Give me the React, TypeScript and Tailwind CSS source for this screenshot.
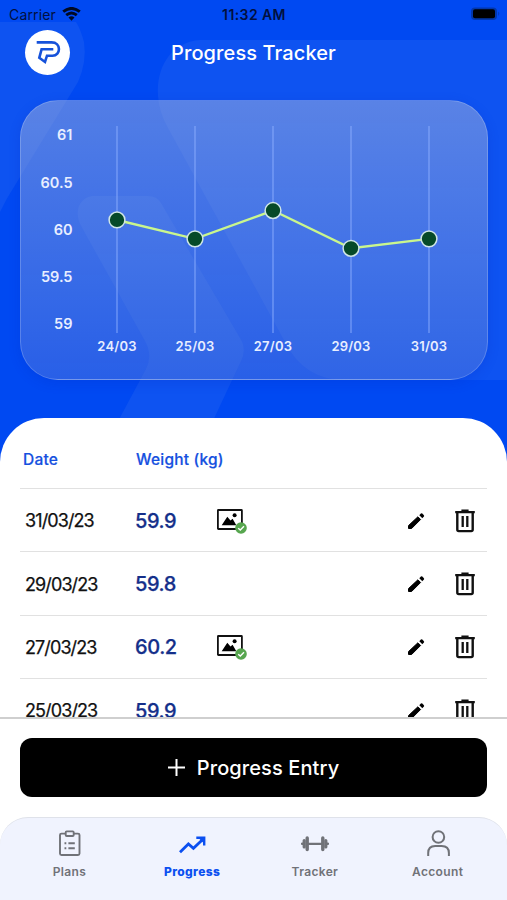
import type { ReactNode } from 'react'
import { clsx } from 'clsx'

interface Entry {
  date: string
  weight: string
  hasPhoto: boolean
}

const ENTRIES: Entry[] = [
  { date: '31/03/23', weight: '59.9', hasPhoto: true },
  { date: '29/03/23', weight: '59.8', hasPhoto: false },
  { date: '27/03/23', weight: '60.2', hasPhoto: true },
  { date: '25/03/23', weight: '59.9', hasPhoto: false },
]

const POINTS = [
  { label: '24/03', value: 60.1 },
  { label: '25/03', value: 59.9 },
  { label: '27/03', value: 60.2 },
  { label: '29/03', value: 59.8 },
  { label: '31/03', value: 59.9 },
]

const TICKS = [61, 60.5, 60, 59.5, 59]

const xAt = (index: number) => 96 + index * 78
const yAt = (value: number) => 34 + (61 - value) * 94.4

function Backdrop() {
  return (
    <svg className="absolute inset-0" width="507" height="480" viewBox="0 0 507 480" fill="#0e53f1">
      <path d="M0 22H76C80 28 82 35 84 42Q87 62 78 82L14 187Q6 199 0 212Z" />
      <path d="M507 40H200C172 42 156 66 158 96Q159 112 168 128L285 342Q304 380 345 380H507Z" />
      <path d="M92 196H148Q157 196 161 203L240 338Q247 349 241 361L211 425H116L146 369Q153 355 145 341L80 224C74 210 80 198 92 196Z" />
    </svg>
  )
}

function StatusBar() {
  return (
    <div className="flex h-7 items-center justify-between pr-1.5 pl-[9px] text-[#02103f]">
      <div className="flex w-40 items-center gap-1.5">
        <span className="text-[14px] tracking-[0.15px]">Carrier</span>
        <svg width="19" height="14" viewBox="0 0 19 14" fill="none" stroke="#000a24" strokeWidth="2.9">
          <path d="M1.2 4.7Q9.5-1.9 17.8 4.7" />
          <path d="M4.2 8.2Q9.5 3.9 14.8 8.2" />
          <path d="M9.5 13.8 6.5 10.5Q9.5 8.2 12.5 10.5Z" fill="#000a24" stroke="none" />
        </svg>
      </div>
      <span className="-ml-0.5 text-[14px] font-semibold tracking-[0.4px]">11:32 AM</span>
      <div className="flex w-40 justify-end">
        <svg width="31" height="14" viewBox="0 0 31 14">
          <rect x="1" y="0.5" width="26" height="12.5" rx="4" fill="#0237ac" />
          <rect x="3" y="2.3" width="22" height="9" rx="2" fill="#000" />
          <path d="M28.3 4.5Q30.2 6.7 28.3 9Z" fill="#0237ac" />
        </svg>
      </div>
    </div>
  )
}

function Logo() {
  return (
    <div className="flex size-[45px] items-center justify-center rounded-full bg-white">
      <svg width="45" height="45" viewBox="0 0 45 45" fill="none" stroke="#1652da" strokeWidth="2.6">
        <path d="M11.7 12.4H26.5C36.5 12.4 36 25.7 27.5 25.7H22L20 32 14.3 27.8 16.6 19.2H28.3" />
      </svg>
    </div>
  )
}

function Header() {
  return (
    <header className="grid h-12 grid-cols-[1fr_auto_1fr] items-center px-[25px]">
      <Logo />
      <h1 className="pt-px text-[20px] font-medium tracking-[0.1px] text-white">Progress Tracker</h1>
      <span />
    </header>
  )
}

function WeightChart() {
  const line = POINTS.map((p, i) => `${xAt(i)},${yAt(p.value)}`).join(' ')

  return (
    <section className="mx-5 mt-6 mb-[38px] h-[280px] w-[468px] rounded-[38px] border-[1.5px] border-white/20 bg-linear-to-b from-[#a5b3da]/50 to-[#5a7bda]/45 shadow-[0_3px_12px_rgba(0,40,190,0.2)]">
      <svg width="465" height="277" viewBox="0 0 465 277">
        {TICKS.map((tick) => (
          <text key={tick} x="51.5" y={yAt(tick) + 5.3} textAnchor="end" className="fill-[#e8eeff] text-[14.5px] font-semibold">
            {tick}
          </text>
        ))}
        {POINTS.map((p, i) => (
          <g key={p.label}>
            <line x1={xAt(i)} x2={xAt(i)} y1="25" y2="232" stroke="#8fb0ff" strokeOpacity="0.5" strokeWidth="1.8" />
            <text x={xAt(i)} y="249.5" textAnchor="middle" className="fill-[#e8eeff] text-[13px] font-semibold tracking-[0.2px]">
              {p.label}
            </text>
          </g>
        ))}
        <polyline points={line} fill="none" stroke="#c9f68d" strokeWidth="2.4" />
        {POINTS.map((p, i) => (
          <circle key={p.label} cx={xAt(i)} cy={yAt(p.value)} r="7.9" fill="#064a29" stroke="#cfe6e6" strokeWidth="1.5" />
        ))}
      </svg>
    </section>
  )
}

function PhotoIcon() {
  return (
    <svg width="32" height="28" viewBox="0 0 32 28">
      <rect x="2.9" y="3" width="24" height="19" rx="0.5" fill="none" stroke="#111" strokeWidth="1.8" />
      <path d="M6.7 18.3 12.3 9.7 15.5 13.5 17.6 11.8 21.3 18.3Z" fill="#000" />
      <circle cx="19.6" cy="8.3" r="2" fill="#000" />
      <circle cx="26" cy="21" r="5.8" fill="#57a64f" />
      <path d="M23.2 21.2 25.3 23.1 29 19.3" fill="none" stroke="#fff" strokeWidth="1.4" />
    </svg>
  )
}

function PencilIcon() {
  return (
    <svg width="18" height="18" viewBox="0 0 18 18">
      <path d="M1.5 16.5V13.6L10.9 4.8 13.6 7.5 4.6 16.5Z" stroke="#000" strokeLinejoin="round" strokeWidth="1" />
      <path d="M12.3 3.2 13.9 1.6Q14.6 1 15.3 1.6L16.9 3.2Q17.5 3.9 16.9 4.6L15.3 6.2Z" />
    </svg>
  )
}

function TrashIcon() {
  return (
    <svg width="20" height="24" viewBox="0 0 20 24" fill="none" stroke="#111">
      <path d="M.2 3.2H19.8M6.4 1.7H13.6" strokeWidth="2.2" />
      <path d="M2.3 3.4V20.6Q2.3 22.1 3.8 22.1H16.2Q17.7 22.1 17.7 20.6V3.4" strokeWidth="2.4" />
      <path d="M7.7 7V18M12.3 7V18" strokeWidth="2.3" />
    </svg>
  )
}

function EntryRow({ entry }: { entry: Entry }) {
  return (
    <div className="flex h-[63.4px] shrink-0 items-center border-t-[1.5px] border-[#e1e1e1] pt-px pr-3 pl-[5px]">
      <span className="w-[110px] text-[18px] tracking-[-0.9px] text-[#111] [-webkit-text-stroke:0.25px_#111]">{entry.date}</span>
      <span className="w-20 text-[20px] font-medium tracking-[-0.4px] text-[#142f8a] [-webkit-text-stroke:0.25px_#142f8a]">{entry.weight}</span>
      {entry.hasPhoto && <PhotoIcon />}
      <div className="ml-auto flex items-center gap-[30px]">
        <PencilIcon />
        <TrashIcon />
      </div>
    </div>
  )
}

function EntryTable() {
  return (
    <section className="flex h-[299px] flex-col overflow-hidden rounded-t-[44px] bg-white px-5">
      <div className="flex h-[70px] shrink-0 items-center pt-3.5 pl-[3px] text-[15.5px] font-medium tracking-[0.2px] text-[#1550df] [-webkit-text-stroke:0.2px_#1550df]">
        <span className="w-[113px]">Date</span>
        <span>Weight (kg)</span>
      </div>
      {ENTRIES.map((entry) => (
        <EntryRow key={entry.date} entry={entry} />
      ))}
    </section>
  )
}

function ClipboardIcon() {
  return (
    <svg width="24" height="28" viewBox="0 0 24 28" fill="none" stroke="currentColor" strokeWidth="1.9">
      <rect x="3" y="4.6" width="19.5" height="21.4" rx="1.5" />
      <rect x="8.7" y="2.4" width="8" height="4.6" rx="1" fill="#f0f3fe" />
      <path d="M7.5 14.2H9.3M11.4 14.2H17.8M7.5 19.2H9.3M11.4 19.2H17.8" />
    </svg>
  )
}

function TrendIcon() {
  return (
    <svg width="28" height="28" viewBox="0 0 28 28" fill="none" stroke="currentColor" strokeWidth="2.8">
      <path d="M2 23.2 10.4 15 15.4 19.3 24.7 10.4" />
      <path d="M18.3 8.8H26.2V16.5" strokeWidth="2.4" />
      <path d="M20 8.5H26.5V15Z" fill="currentColor" stroke="none" />
    </svg>
  )
}

function DumbbellIcon() {
  return (
    <svg width="28" height="28" viewBox="0 0 28 28" fill="none" stroke="currentColor" strokeLinecap="round">
      <path d="M7 14.8H21" strokeWidth="2.3" />
      <path d="M6.2 9V20.6M21.8 9V20.6" strokeWidth="3.4" />
      <path d="M3.2 11.6V18M24.8 11.6V18" strokeWidth="3.2" />
      <path d="M1 14.8H2M26 14.8H27" strokeWidth="2.4" />
    </svg>
  )
}

function PersonIcon() {
  return (
    <svg width="26" height="28" viewBox="0 0 26 28" fill="none" stroke="currentColor" strokeWidth="2">
      <circle cx="13.4" cy="8" r="5.8" />
      <path d="M3.2 27V24Q3.2 17 10.2 17H16.6Q23.9 17 23.9 24V27" />
    </svg>
  )
}

const TABS: { label: string; icon: ReactNode }[] = [
  { label: 'Plans', icon: <ClipboardIcon /> },
  { label: 'Progress', icon: <TrendIcon /> },
  { label: 'Tracker', icon: <DumbbellIcon /> },
  { label: 'Account', icon: <PersonIcon /> },
]

function TabBar() {
  return (
    <nav className="flex h-[83px] rounded-t-[28px] border-t border-[#dfe2ea] bg-[#f0f3fe] px-2">
      {TABS.map((tab) => {
        const active = tab.label === 'Progress'
        return (
          <button
            key={tab.label}
            className={clsx(
              'flex flex-1 flex-col items-center pt-[11px] text-[12px] tracking-[0.35px]',
              active ? 'font-extrabold text-[#0b4ff0]' : 'font-semibold text-[#707278]',
            )}
          >
            {tab.icon}
            <span className="mt-1.5">{tab.label}</span>
          </button>
        )
      })}
    </nav>
  )
}

export default function App() {
  return (
    <div className="relative h-[900px] w-[507px] overflow-hidden bg-[#0049f2] font-['Inter',sans-serif]">
      <Backdrop />
      <div className="relative flex h-full flex-col">
        <StatusBar />
        <Header />
        <WeightChart />
        <EntryTable />
        <div className="flex flex-1 flex-col bg-white">
          <div className="flex-1 border-t-2 border-[#cfcfcf] px-5 pt-[19px]">
            <button className="flex h-[59px] w-full items-center justify-center gap-3 rounded-xl bg-black text-[20px] font-medium tracking-[0.1px] text-white">
              <svg width="17" height="17" viewBox="0 0 17 17" stroke="#fff" strokeWidth="2">
                <path d="M8.5 0V17M0 8.5H17" />
              </svg>
              Progress Entry
            </button>
          </div>
          <TabBar />
        </div>
      </div>
    </div>
  )
}
